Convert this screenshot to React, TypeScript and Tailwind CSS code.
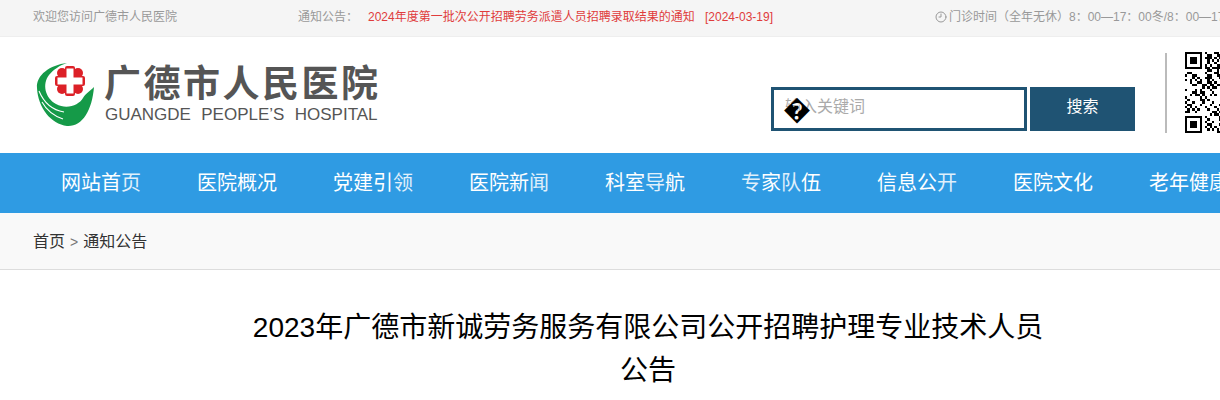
import React from 'react';
import { Clock9 } from 'lucide-react';

// the reference renders some glyphs noticeably thinner than their neighbours
const thinChars = '页领闻导专队开';
const navItems = ['网站首页', '医院概况', '党建引领', '医院新闻', '科室导航', '专家队伍', '信息公开', '医院文化', '老年健康'];

const fontStack = "font-['Liberation_Sans','Noto_Sans_CJK_SC',sans-serif]";

const Logo = () => (
  <svg width="60" height="66" viewBox="0 0 60 66" className="shrink-0">
    <path
      fill="#159a48"
      d="M31 2C14 4 0 14 1 27C2 47 15 63 31 65C46 66 56 50 58 26C54 30 50 32 47 37C43 44 31 49 20 43C9 37 6 23 13 14C17 9 24 4 31 2Z"
    />
    <path fill="none" stroke="#fff" strokeWidth="1.100" d="M3 30C8 42 16 49 28 51" />
    <path fill="none" stroke="#fff" strokeWidth="1.100" d="M6 41C11 50 18 55 27 58" />
    <g fill="#dc2027">
      <circle cx="26" cy="12" r="5" />
      <circle cx="42" cy="12" r="5" />
      <circle cx="26" cy="28" r="5" />
      <circle cx="42" cy="28" r="5" />
      <rect x="29" y="5" width="10" height="30" rx="2" />
      <rect x="19" y="15" width="30" height="10" rx="2" />
    </g>
    <path fill="#fff" d="M30.500 7.500h7v9h9v7h-9v9h-7v-9h-9v-7h9z" />
  </svg>
);

const finder = (x: number, y: number) => (
  <g key={`${x}-${y}`}>
    <rect x={x} y={y} width="7" height="7" fill="#000" />
    <rect x={x + 1} y={y + 1} width="5" height="5" fill="#fff" />
    <rect x={x + 2} y={y + 2} width="3" height="3" fill="#000" />
  </g>
);

const QrCode = () => {
  const cells: React.ReactNode[] = [];
  for (let r = 0; r < 33; r++) {
    for (let c = 0; c < 33; c++) {
      if ((r < 8 && c < 8) || (r > 24 && c < 8) || (r < 8 && c > 24)) continue;
      if (r > 13 && r < 20 && c > 12 && c < 20) continue;
      const v = (r * 7 + c * 13 + ((r * c) % 11) * 5 + ((r ^ c) % 7)) % 5;
      if (v < 2) cells.push(<rect key={`${r}-${c}`} x={c} y={r} width="1" height="1" fill="#000" />);
    }
  }
  return (
    <svg width="81" height="81" viewBox="0 0 33 33" className="ml-[18px] mt-[15px] shrink-0" shapeRendering="crispEdges">
      {cells}
      {finder(0, 0)}
      {finder(0, 26)}
      {finder(26, 0)}
    </svg>
  );
};

export default function App() {
  return (
    <div className={`w-[1220px] h-[400px] overflow-hidden bg-white ${fontStack}`}>
      <div className="flex items-center h-[37px] bg-[#f5f5f5] border-b border-[#eeeeee] pl-[33px] pb-[2px] text-xs text-[#999999] whitespace-nowrap">
        <span className="w-[265px] shrink-0">欢迎您访问广德市人民医院</span>
        <span className="w-[70px] shrink-0">通知公告：</span>
        <span className="w-[337px] shrink-0 text-[#e03c3c]">2024年度第一批次公开招聘劳务派遣人员招聘录取结果的通知</span>
        <span className="w-[230px] shrink-0 text-[#e03c3c]">[2024-03-19]</span>
        <Clock9 size={12} className="shrink-0 mr-[2px]" />
        <span>门诊时间（全年无休）8：00—17：00冬/8：00—17：00夏</span>
      </div>

      <div className="flex h-[116px] pl-[36px]">
        <div className="mt-[24px] shrink-0"><Logo /></div>
        <div className="ml-[9px] mt-[27px] w-[273px] shrink-0 text-[#555555] whitespace-nowrap">
          <div className="text-[37px] leading-[42px] font-bold tracking-[2.500px] -ml-[1px]">广德市人民医院</div>
          <div className="text-[17px] leading-[17px] [word-spacing:5.600px]">GUANGDE PEOPLE’S HOSPITAL</div>
        </div>
        <div className="flex ml-[393px] mt-[50px] h-[44px] shrink-0">
          <div className="relative flex items-center w-[256px] border-[3px] border-[#1f5373] pl-[11px] pb-[4px] text-base text-[#aaaaaa]">
            输入关键词
            <span className="absolute left-[9px] top-[4px] text-[28px] leading-[32px] text-black">�</span>
          </div>
          <button className="w-[105px] ml-[3px] pb-[4px] bg-[#1f5373] text-white text-base">搜索</button>
        </div>
        <div className="ml-[30px] mt-[16px] w-[2px] h-[80px] shrink-0 bg-[#bbbbbb]" />
        <QrCode />
      </div>

      <div className="flex h-[60px] items-center bg-[#2f9be3] pl-[33px] text-xl text-white whitespace-nowrap">
        {navItems.map((item) => (
          <span key={item} className="px-[28px] shrink-0">
            {item.split('').map((ch, i) =>
              thinChars.includes(ch) ? <span key={i} className="text-white/85">{ch}</span> : ch
            )}
          </span>
        ))}
      </div>

      <div className="flex items-center h-[57px] pt-[2px] bg-[#f9f9f9] border-b border-[#dddddd] pl-[33px] text-base text-[#333333]">
        首页<span className="mx-[5px] text-sm text-[#777777]">&gt;</span>通知公告
      </div>

      <div className="w-[800px] ml-[248px] mt-[36px] text-center text-[28px] leading-[43px] text-black">
        2023年广德市新诚劳务服务有限公司公开招聘护理专业技术人员公告
      </div>
    </div>
  );
}
